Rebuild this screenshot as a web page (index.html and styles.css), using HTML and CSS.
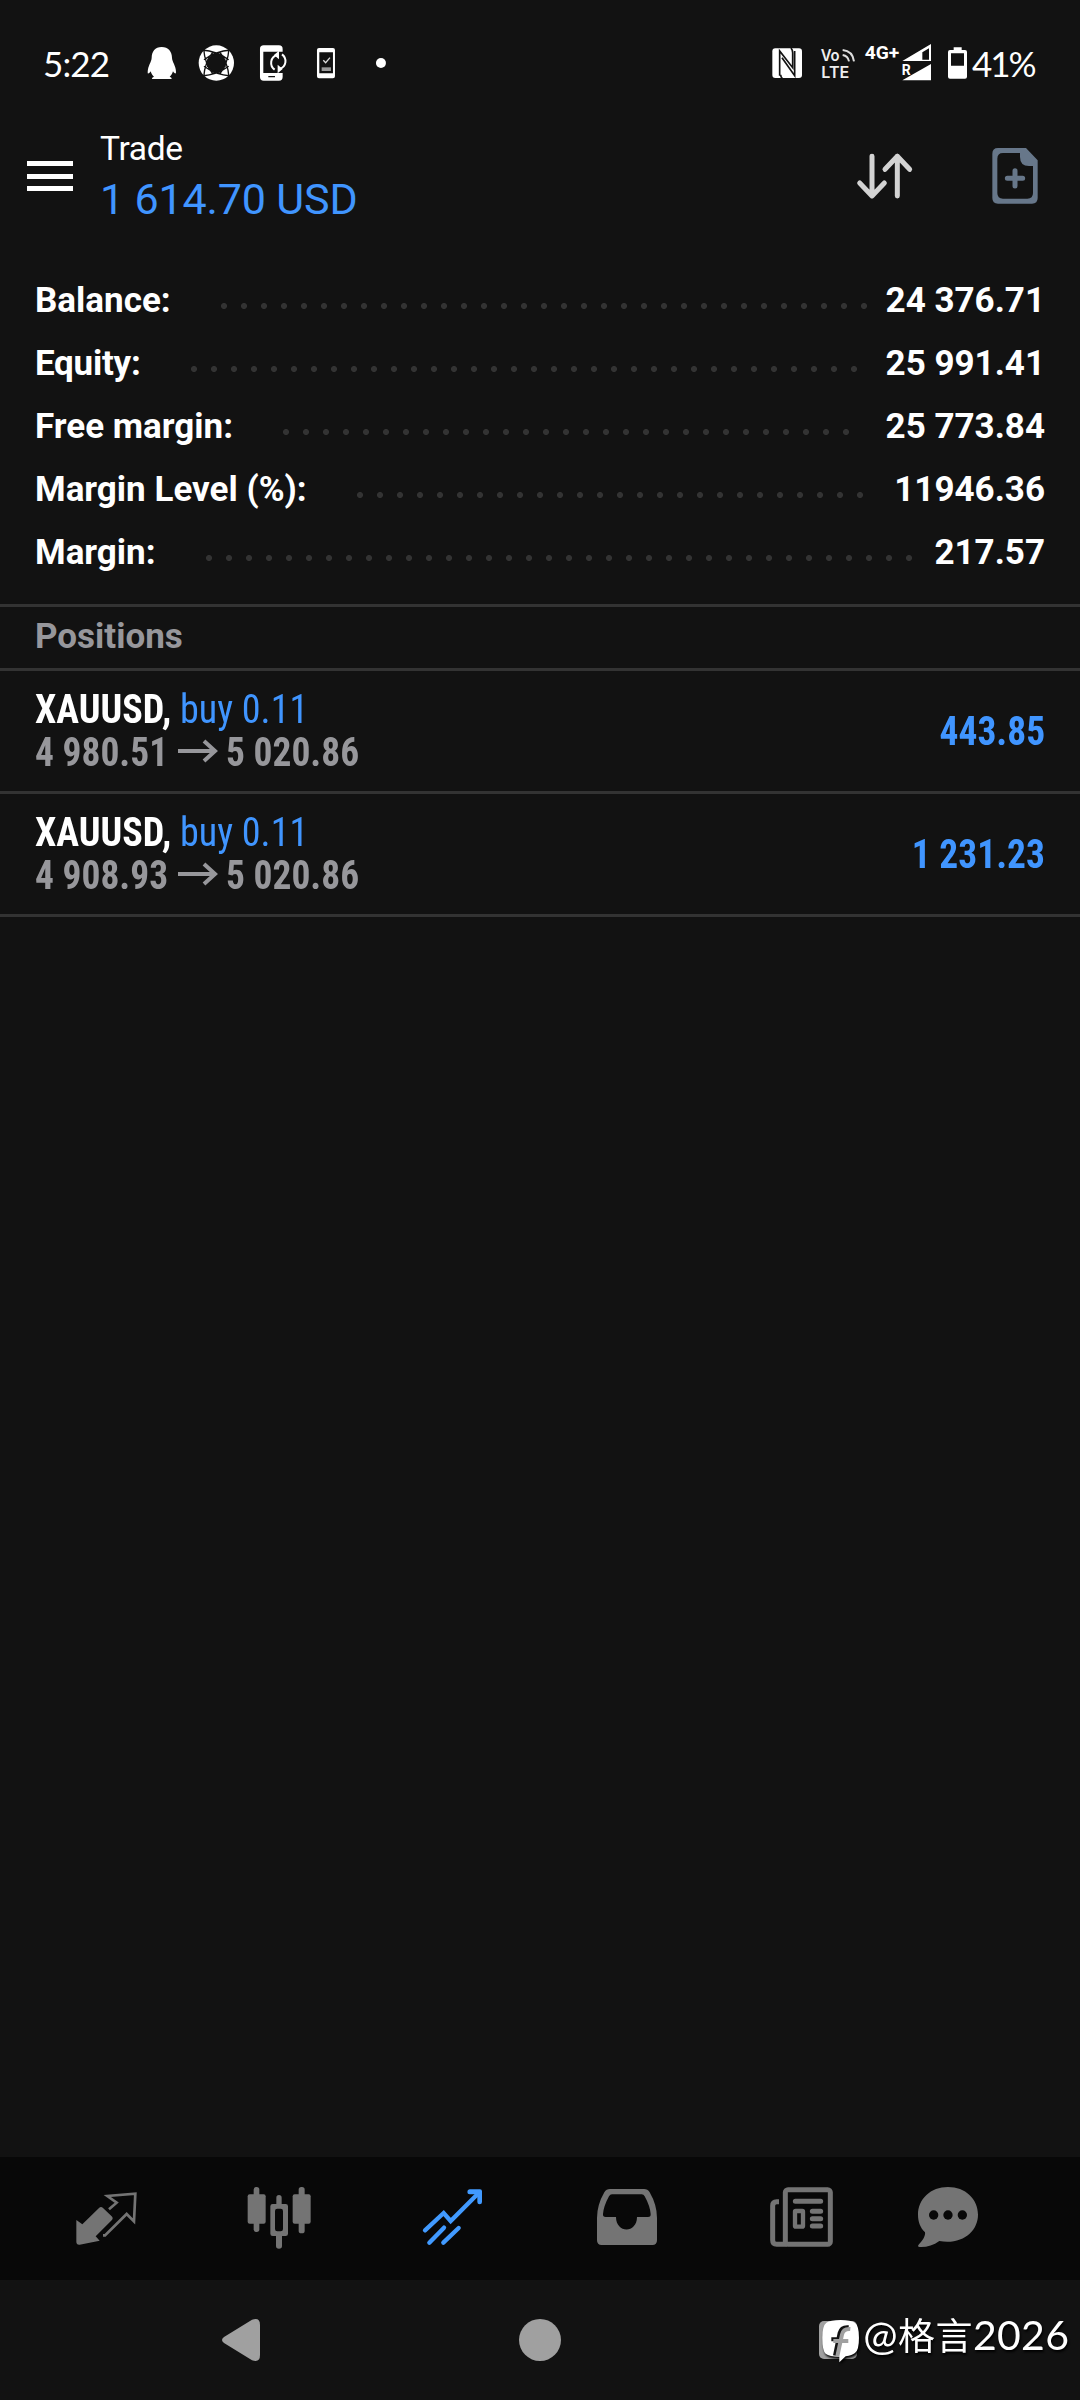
FILE: index.html
```html
<!DOCTYPE html>
<html lang="en">
<head>
<meta charset="utf-8">
<title>Trade</title>
<link rel="stylesheet" href="styles.css">
</head>
<body>
<div class="screen">
  <header class="status">
    <span class="clock">5:22</span>
    <svg class="notices" viewBox="420 60 760 135"><g fill="#fff">
      <path d="M485 81c-20 0-30 14-30 32 0 12-12 24-12 44 0 6 5 4 9-3 2 8 6 13 10 16-7 3-8 7-4 7h55c4 0 3-4-4-7 4-3 8-8 10-16 4 7 9 9 9 3 0-20-12-32-12-44 0-18-11-32-31-32z"/>
      <circle cx="649" cy="129" r="53"/>
      <circle cx="1143" cy="129" r="15"/></g>
      <path fill="#121212" d="M639 101h20l18 18v20l-18 19h-20l-18-19v-20z"/>
      <path fill="none" stroke="#121212" stroke-width="4" d="M606 90q45 3 80 29M692 90q-45 3-80 29M606 168q45-3 80-29M692 168q-45-3-80-29M611 86q3 45 28 76M611 172q3-45 28-76M687 86q-3 45-28 76M687 172q-3-45-28-76"/>
      <path fill="#fff" fill-rule="evenodd" d="M791 76h46q11 0 11 11v8h-58v64h58v12q0 11-11 11h-46q-11 0-11-11V87q0-11 11-11zm14 92v4h20v-4z"/>
      <g fill="none" stroke="#fff" stroke-width="6"><path d="M824 149c-16-12-14-38 8-44M846 103c16 12 14 38-8 44"/></g>
      <path fill="#fff" d="M822 105l15-13v26zM848 147l-15-13v26z"/>
      <path fill="#fff" fill-rule="evenodd" d="M957 84h42q6 0 6 6v79q0 6-6 6h-42q-6 0-6-6V90q0-6 6-6zm1 13v63h41V97z"/>
      <path d="M970 121l7 7 13-15" fill="none" stroke="#ddd" stroke-width="4"/><path fill="#999" d="M965 142h28v11h-28z"/>
    </svg>
    <svg class="signals" viewBox="90 65 600 125">
      <rect x="97" y="84" width="89" height="89" rx="9" fill="#fff"/>
      <path d="M119 166V92l39 50V97q0-8-5-14M127 175q-5-5-5-12M126 112l38 54V92" fill="none" stroke="#121212" stroke-width="5"/>
      <g class="tiny" fill="#eee"><text x="242" y="121" font-size="47" textLength="57" lengthAdjust="spacingAndGlyphs">Vo</text><text x="244" y="172" font-size="47" textLength="84" lengthAdjust="spacingAndGlyphs">LTE</text></g>
      <g class="net" fill="#fff"><text x="374" y="116" font-size="57" textLength="104" lengthAdjust="spacingAndGlyphs">4G+</text><text x="485" y="163" font-size="42">R</text></g>
      <path d="M308 89q30 3 34 34M308 104q16 3 19 19" fill="none" stroke="#ddd" stroke-width="6"/>
      <path fill="#fff" fill-rule="evenodd" d="M573 71v51h-86zM567 84l-20 12v22h20zM573 131v49h-86z"/>
      <path fill="#fff" fill-rule="evenodd" d="M641 81h24v8h10q6 0 6 6v74q0 6-6 6h-45q-6 0-6-6V95q0-6 6-6h11zM633 99v37h39V99z"/>
    </svg>
    <span class="battery">41%</span>
  </header>

  <div class="appbar">
    <div class="menu"><i></i><i></i><i></i></div>
    <div class="heading"><div class="title">Trade</div><div class="total">1 614.70 USD</div></div>
    <svg class="sort" viewBox="346 380 180 175" fill="none" stroke="#d3d3d3" stroke-width="15" stroke-linecap="round" stroke-linejoin="round"><path d="M397 408v119M360 488l37 39 37-39M473 527V408M436 447l37-39 37 39"/></svg>
    <svg class="neworder" viewBox="750 378 150 180"><path fill="#67778a" fill-rule="evenodd" d="M774 384h84l35 37v113q0 17-17 17H774q-17 0-17-17V401q0-17 17-17zm15 15q-17 0-17 17v103q0 17 17 17h73q17 0 17-17v-81h-12q-27 0-27-27v-12z"/><path d="M802 475h46M825 452v46" stroke="#67778a" stroke-width="15" stroke-linecap="round"/></svg>
  </div>

  <section class="account">
    <div class="line"><b>Balance:</b><span class="dots d33"></span><b>24 376.71</b></div>
    <div class="line"><b class="equity">Equity:</b><span class="dots d34"></span><b>25 991.41</b></div>
    <div class="line"><b>Free margin:</b><span class="dots d29"></span><b>25 773.84</b></div>
    <div class="line"><b>Margin Level (%):</b><span class="dots d26"></span><b>11946.36</b></div>
    <div class="line"><b>Margin:</b><span class="dots d36"></span><b>217.57</b></div>
  </section>

  <h2 class="section">Positions</h2>
  <div class="position">
    <div class="deal"><div class="symbol"><b>XAUUSD,</b> <span>buy 0.11</span></div>
      <div class="prices"><span class="from"><span class="price">4 980.51</span></span><svg class="arrow" viewBox="0 0 40 24"><path d="M0 12h37M26 2l11 10-11 10"/></svg><span class="price">5 020.86</span></div></div>
    <div class="profit">443.85</div>
  </div>
  <div class="position">
    <div class="deal"><div class="symbol"><b>XAUUSD,</b> <span>buy 0.11</span></div>
      <div class="prices"><span class="from"><span class="price">4 908.93</span></span><svg class="arrow" viewBox="0 0 40 24"><path d="M0 12h37M26 2l11 10-11 10"/></svg><span class="price">5 020.86</span></div></div>
    <div class="profit">1 231.23</div>
  </div>

  <nav class="tabs">
    <div class="tab"><svg viewBox="93 129 210 213"><path fill="#747474" d="M109 240l18 13 50-49q6-6 12 0l26 25q6 6 0 12l-48 48 12 13-60 12q-10 1-10-9z"/><path fill="none" stroke="#747474" stroke-width="8" d="M207 208l23-20-28-20 84-7-4 83-22-22-65 64h-6"/></svg></div>
    <div class="tab"><svg viewBox="615 129 210 213" fill="#747474"><rect x="641" y="141" width="17" height="135" rx="8"/><rect x="623" y="163" width="54" height="88" rx="6"/><rect x="776" y="141" width="18" height="139" rx="8"/><rect x="758" y="163" width="54" height="88" rx="6"/><path fill-rule="evenodd" d="M709 192v-19q0-8 8-8t8 8v19h12q7 0 7 7v82q0 7-7 7h-11v30q0 8-9 8t-9-8v-30h-10q-7 0-7-7v-82q0-7 7-7zm3 14q-7 0-7 7v54q0 7 7 7h10q7 0 7-7v-54q0-7-7-7z"/></svg></div>
    <div class="tab"><svg viewBox="1137 129 210 213" fill="none" stroke="#419aff" stroke-width="13" stroke-linecap="round"><path d="M1155 271l56-52 21 24 84-84M1168 308l44-45M1210 308l46-44"/><path stroke="none" fill="#419aff" d="M1289 148h31q6 0 6 6v32q0 7-7 7t-7-7v-23h-23q-7 0-7-7t7-8z"/></svg></div>
    <div class="tab"><svg viewBox="99 129 210 213"><path fill="#747474" fill-rule="evenodd" d="M150 147h102q11 0 17 10 22 38 22 77v67q0 14-14 14H125q-14 0-14-14v-67q0-39 22-77 6-10 17-10zm6 16q-6 0-9 6-16 29-18 53-1 9 8 9h31c0 50 63 50 63 0h33q9 0 8-9-2-24-18-53-3-6-9-6z"/></svg></div>
    <div class="tab"><svg viewBox="621 129 210 213" fill="none" stroke="#747474"><rect x="676" y="149" width="135" height="164" rx="8" stroke-width="15"/><path stroke-width="15" d="M657 185h-7q-12 0-12 12v104q0 12 12 12h30"/><path stroke-width="15" stroke-linecap="round" d="M706 184h76M757 214h25M757 236h25M757 258h25"/><rect x="705" y="213" width="24" height="47" rx="2" stroke-width="13"/></svg></div>
    <div class="tab last"><svg viewBox="1059 129 210 213"><path fill="#747474" d="M1164 141c52 0 90 36 90 83 0 49-46 91-116 79-18 13-38 19-59 18-6 0-6-4-2-8 11-12 20-25 18-36-14-14-21-32-21-53 0-47 38-83 90-83z"/><g fill="#080808"><circle cx="1121" cy="225" r="14"/><circle cx="1164" cy="225" r="14"/><circle cx="1207" cy="225" r="14"/></g></svg></div>
  </nav>
  <footer class="sysnav">
    <svg class="back" viewBox="0 0 38 42"><path fill="#a0a0a0" d="M2 18L30 .8Q38-2 38 6v30q0 8-8 5.200L2 24q-4-3 0-6z"/></svg>
    <span class="home"></span><span class="recent"></span>
    <div class="mark">
      <svg viewBox="780 535 130 140"><path fill="#fff" d="M842 541q30 0 43 8 12 9 12 45 0 38-12 46-8 7-28 10l-19 18v-17q-30 0-41-9-10-9-10-48 0-36 12-45 12-8 43-8z"/><g fill="none" stroke-width="12"><path stroke="#121212" d="M866 563q-22-2-27 17l-14 68M814 599h20"/><path stroke="#a0a0a0" d="M871 568q-21-2-25 17l-14 65M820 604h45"/></g></svg>
      <span class="handle">@<span class="han">格言</span>2026</span>
    </div>
  </footer>
</div>
</body>
</html>
```
FILE: styles.css
```css
* { box-sizing: border-box; }
body { margin: 0; background: #121212; }
.screen { width: 1080px; height: 2400px; display: flex; flex-direction: column; background: #121212; color: #fff; font-family: Roboto, "Noto Sans CJK SC", sans-serif; overflow: hidden; }
.status { height: 125px; display: flex; align-items: flex-start; padding: 40px 0 0 43px; font-family: Lato, sans-serif; }
.clock, .battery { font-size: 35px; line-height: 46px; white-space: nowrap; letter-spacing: -0.900px; }
.clock { width: 97px; }
.notices { width: 253.300px; height: 45px; flex: none; }
.signals { width: 200px; height: 41.700px; margin: 2px 0 0 376.700px; flex: none; overflow: visible; }
.tiny { font-family: Inter, sans-serif; font-weight: 600; }
.net { font-family: Roboto, sans-serif; font-weight: 700; }
.battery { width: 80px; margin-left: 2px; letter-spacing: -2px; }
.appbar { height: 143px; display: flex; align-items: flex-start; padding-left: 27px; }
.menu { width: 73px; padding-top: 36px; display: grid; gap: 7.500px; }
.menu i { width: 46px; height: 5px; background: #fff; }
.heading { width: 755px; }
.title { font-size: 33.500px; line-height: 40px; margin-top: 4px; letter-spacing: -0.300px; }
.total { font-size: 43px; line-height: 50px; margin-top: 5px; color: #4095ff; letter-spacing: -0.150px; }
.sort { width: 60px; height: 58.300px; margin-top: 21.700px; }
.neworder { width: 50px; height: 60px; margin: 21px 0 0 74.700px; }
.account { height: 336px; padding: 1px 35px 0; }
.line { height: 63px; display: flex; align-items: center; font-size: 35px; line-height: 63px; }
.line b:last-child { margin-left: auto; }
.equity { letter-spacing: -0.250px; }
.dots { height: 6px; margin: 10px 0 0 43px; background: radial-gradient(circle, #333 2.600px, transparent 3.400px) 0 0 / 20px 6px; }
.d33 { width: 660px; } .d34 { width: 680px; } .d29 { width: 580px; } .d26 { width: 520px; } .d36 { width: 720px; }
.section { height: 67px; margin: 0; padding: 0 35px; border: solid #333; border-width: 3px 0; font-size: 35px; line-height: 60px; color: #97979b; }
.position { height: 123px; display: flex; justify-content: space-between; padding: 17px 35px 0; border-bottom: 3px solid #333; font-family: "Roboto Condensed", Roboto, sans-serif; font-stretch: 75%; font-size: 40.500px; line-height: 43px; white-space: nowrap; }
.symbol { transform: scaleX(.94); transform-origin: left; }
.symbol span, .profit { color: #4095ff; }
.prices { display: flex; color: #97979b; font-weight: 700; }
.price { display: inline-block; transform: scaleX(.925); transform-origin: left; }
.from { width: 143px; flex: none; }
.arrow { width: 40px; height: 24px; margin: 8px 8px 0 0; fill: none; stroke: #97979b; stroke-width: 4; flex: none; }
.profit { font-weight: 700; margin-top: 22px; transform: scaleX(.925); transform-origin: right; }
.tabs { height: 123px; margin-top: auto; display: flex; padding-left: 19px; background: #080808; flex: none; }
.tab { width: 174px; display: flex; align-items: center; justify-content: center; }
.tab svg { width: 70px; height: 71px; }
.last { width: 118px; }
.sysnav { height: 120px; display: flex; position: relative; flex: none; }
.back { width: 38px; height: 42px; margin: 39px 0 0 222px; }
.home { width: 42px; height: 42px; margin: 39px 0 0 259px; border-radius: 50%; background: #a0a0a0; }
.recent { width: 38px; height: 38px; margin: 41px 0 0 258px; border-radius: 5px; background: #a0a0a0; }
.mark { position: absolute; left: 820px; top: 27px; display: flex; align-items: flex-start; filter: drop-shadow(1px 2px 1px #000); }
.mark svg { width: 43.300px; height: 46.700px; margin-top: 11px; }
.handle { font: 41px/56px Lato, "Noto Sans CJK SC", sans-serif; white-space: nowrap; letter-spacing: 0.300px; }
.han { font-size: 37px; letter-spacing: 0.500px; }
```
